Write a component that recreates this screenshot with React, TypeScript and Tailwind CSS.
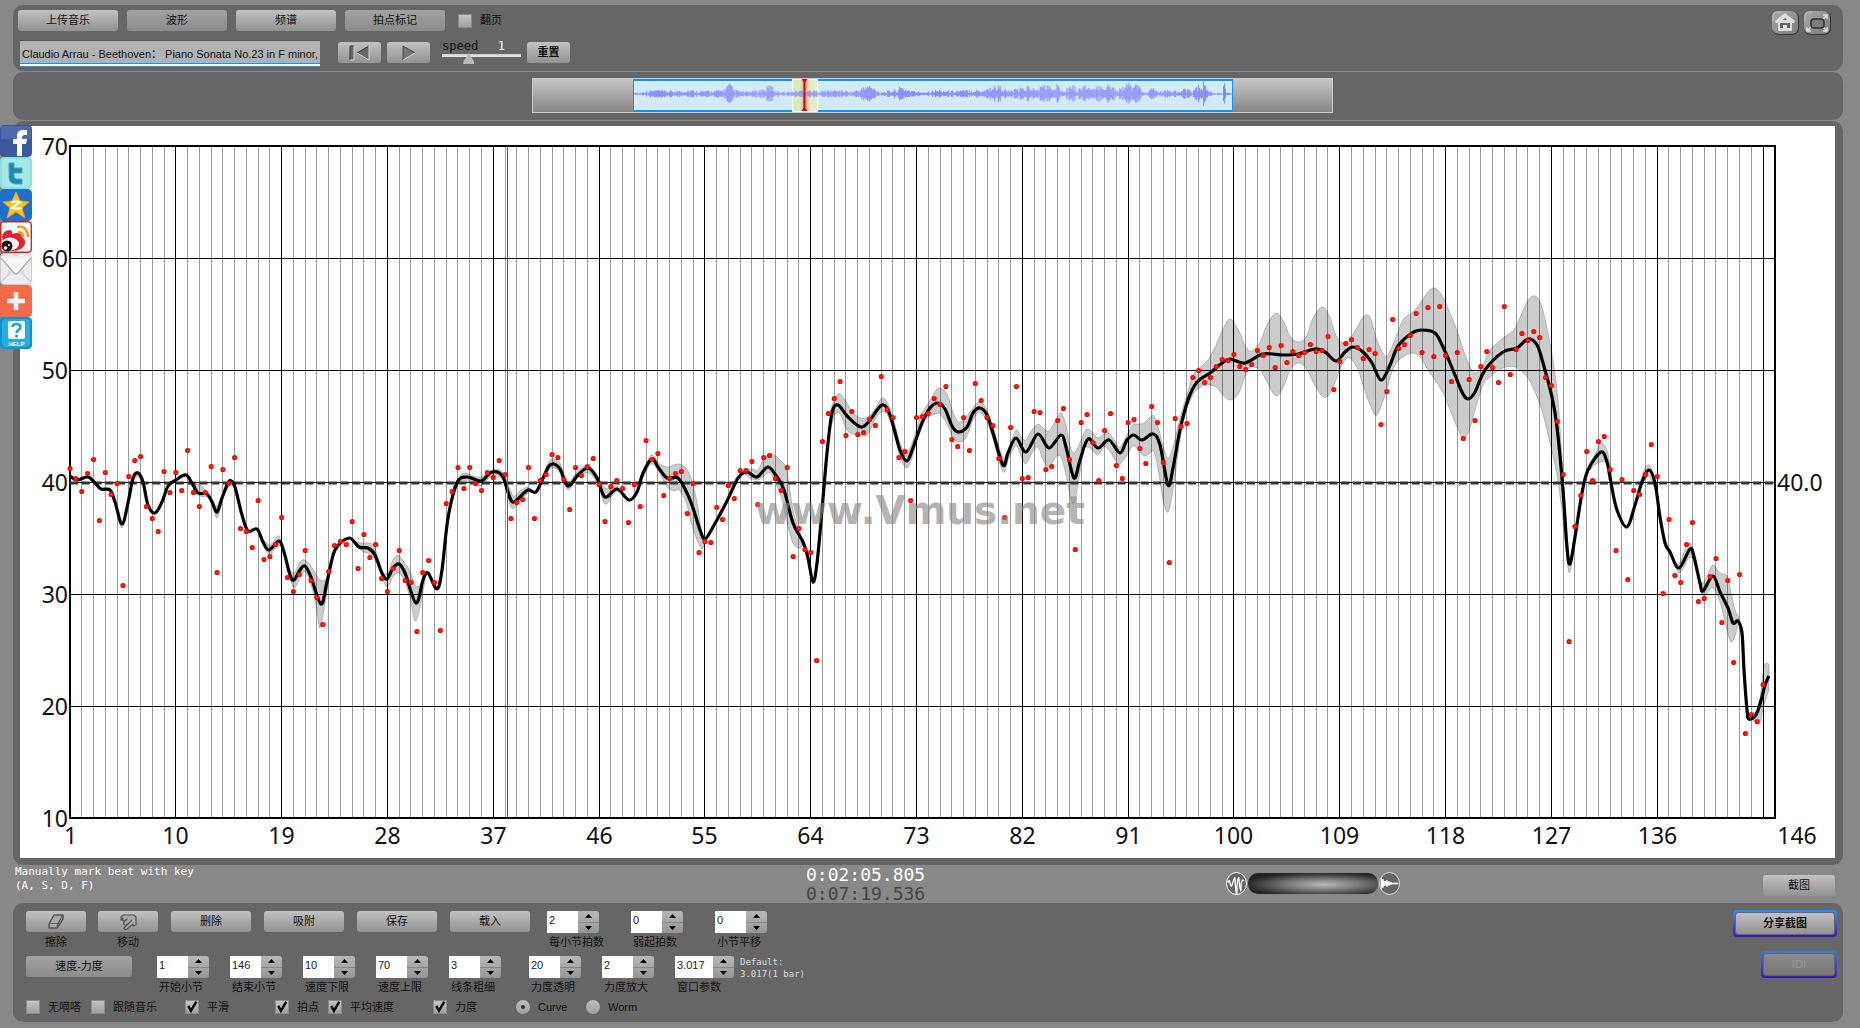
import type { ReactNode } from "react";

type Point = [number, number];
type BandPoint = [number, number, number];

const PLOT = { left: 70, right: 1776, top: 146, bottom: 818 };
const BAR_WIDTH = 11.757;
const BEAT_WIDTH = BAR_WIDTH / 2;
const LAST_BAR = 146;

const tempoTicks = [70, 60, 50, 40, 30, 20, 10];
const barTicks = [1, 10, 19, 28, 37, 46, 55, 64, 73, 82, 91, 100, 109, 118, 127, 136];

// one entry per beat, two beats in a bar
const beats = [
  468, 478, 491, 473, 459, 520, 472, 494, 483, 585, 476, 460, 456, 506, 518, 531, 471, 492, 472, 490,
  450, 492, 506, 492, 466, 572, 469, 483, 457, 528, 531, 547, 500, 559, 556, 544, 517, 577, 591, 574,
  550, 580, 597, 624, 571, 545, 541, 544, 521, 568, 534, 557, 544, 578, 591, 568, 550, 580, 582, 631,
  572, 560, 582, 630, 503, 491, 467, 488, 467, 483, 490, 472, 477, 460, 474, 518, 502, 499, 467, 518,
  480, 474, 454, 457, 479, 509, 467, 475, 466, 458, 484, 521, 486, 480, 488, 522, 484, 506, 440, 459,
  453, 495, 478, 473, 471, 513, 483, 552, 541, 542, 507, 519, 485, 498, 470, 470, 461, 504, 457, 455,
  478, 490, 467, 556, 528, 549, 552, 660, 441, 413, 398, 381, 435, 411, 434, 432, 419, 425, 376, 409,
  417, 457, 451, 500, 417, 416, 413, 398, 404, 386, 439, 446, 417, 450, 383, 400, 417, 425, 458, 517,
  427, 386, 478, 477, 411, 412, 469, 466, 420, 408, 459, 549, 422, 414, 442, 480, 430, 413, 465, 478,
  422, 419, 448, 463, 406, 422, 462, 562, 418, 426, 423, 377, 370, 382, 377, 366, 359, 360, 354, 366,
  369, 364, 350, 355, 347, 367, 345, 362, 351, 355, 352, 344, 351, 350, 336, 389, 361, 343, 339, 347,
  358, 349, 353, 424, 391, 319, 348, 344, 335, 313, 352, 307, 356, 306, 355, 381, 352, 438, 379, 420,
  366, 351, 367, 382, 306, 374, 349, 333, 340, 331, 337, 377, 385, 421, 474, 641, 526, 495, 451, 480,
  441, 436, 469, 550, 479, 579, 490, 494, 474, 444, 476, 593, 519, 575, 582, 544, 522, 601, 598, 576,
  558, 622, 580, 662, 574, 733, 714, 721, 684
];

const tempoCurve: Point[] = [
  [70, 476], [77, 480], [88, 477], [95, 483], [101, 489], [110, 490], [115, 502], [122, 524], [128, 503],
  [133, 478], [138, 473], [143, 482], [148, 505], [155, 513], [162, 502], [168, 486], [176, 480], [186, 475],
  [193, 485], [198, 493], [207, 494], [212, 502], [217, 512], [222, 498], [228, 483], [231, 481], [235, 487],
  [242, 515], [248, 531], [257, 529], [263, 542], [269, 550], [279, 541], [284, 552], [290, 575], [294, 580],
  [300, 570], [305, 566], [311, 577], [321, 604], [327, 582], [335, 550], [349, 538], [359, 547], [368, 548],
  [375, 555], [382, 573], [387, 579], [393, 568], [399, 564], [405, 573], [416, 603], [423, 580], [428, 573],
  [437, 589], [442, 570], [448, 518], [457, 483], [467, 477], [481, 481], [490, 473], [497, 472], [503, 477],
  [510, 498], [514, 502], [521, 496], [528, 490], [536, 492], [543, 478], [549, 466], [554, 464], [560, 469],
  [568, 486], [578, 475], [588, 468], [597, 478], [605, 497], [617, 489], [629, 500], [637, 492], [643, 473],
  [652, 459], [658, 467], [667, 478], [678, 478], [687, 493], [693, 508], [700, 530], [705, 539], [713, 527],
  [727, 501], [738, 478], [747, 472], [757, 477], [768, 467], [777, 477], [784, 490], [793, 523], [803, 542],
  [808, 558], [813, 582], [817, 563], [822, 510], [827, 453], [832, 413], [838, 405], [848, 417], [861, 427],
  [870, 420], [882, 405], [890, 415], [900, 450], [907, 461], [913, 448], [922, 423], [930, 408], [938, 403],
  [945, 409], [952, 426], [958, 432], [967, 427], [973, 413], [980, 408], [987, 415], [993, 433], [1003, 465],
  [1008, 453], [1016, 438], [1026, 452], [1038, 434], [1049, 448], [1061, 435], [1066, 447], [1074, 478],
  [1080, 460], [1088, 439], [1098, 448], [1109, 440], [1120, 453], [1127, 440], [1134, 435], [1142, 440],
  [1153, 434], [1160, 445], [1168, 485], [1173, 468], [1180, 430], [1188, 400], [1197, 382], [1210, 373],
  [1222, 363], [1230, 359], [1245, 363], [1263, 354], [1283, 355], [1298, 354], [1315, 349], [1325, 352],
  [1336, 361], [1345, 352], [1353, 347], [1363, 352], [1372, 363], [1381, 380], [1390, 365], [1398, 346],
  [1412, 333], [1422, 330], [1435, 333], [1443, 347], [1453, 370], [1462, 392], [1468, 399], [1475, 392],
  [1485, 370], [1503, 352], [1517, 348], [1528, 339], [1537, 345], [1543, 363], [1552, 397], [1557, 427],
  [1563, 490], [1567, 547], [1570, 564], [1575, 537], [1582, 493], [1588, 470], [1601, 452], [1607, 462],
  [1611, 483], [1617, 510], [1627, 527], [1635, 505], [1642, 482], [1649, 470], [1655, 483], [1660, 517],
  [1665, 543], [1670, 552], [1679, 568], [1690, 549], [1694, 557], [1700, 583], [1703, 591], [1713, 576],
  [1720, 592], [1728, 608], [1733, 623], [1738, 621], [1742, 633], [1744, 670], [1747, 710], [1749, 719],
  [1756, 715], [1762, 697], [1765, 685], [1769, 676]
];

// x, upper edge, lower edge
const dynamicsBands: BandPoint[][] = [
  [[116, 503, 506], [122, 521, 528], [128, 500, 506]],
  [[134, 474, 480], [138, 471, 476], [143, 478, 485]],
  [[193, 484, 487], [200, 485, 496], [207, 492, 497], [212, 499, 504], [217, 506, 518], [222, 495, 501]],
  [[226, 487, 491], [231, 479, 484], [236, 488, 492]],
  [[262, 538, 543], [269, 545, 555], [273, 542, 552], [279, 536, 545], [285, 552, 557]],
  [[288, 567, 571], [294, 573, 588], [300, 562, 577], [305, 560, 572], [311, 566, 585], [316, 574, 605], [320, 580, 628], [325, 580, 604], [329, 573, 580]],
  [[355, 542, 544], [362, 543, 551], [369, 543, 554], [375, 548, 560], [381, 570, 575], [387, 573, 587], [393, 560, 577], [398, 555, 573], [404, 562, 580], [410, 571, 598], [415, 585, 621], [420, 585, 608], [425, 575, 580]],
  [[453, 486, 492], [460, 476, 482], [466, 473, 481], [473, 476, 482], [481, 477, 486], [490, 471, 477], [497, 469, 476], [504, 474, 482], [510, 489, 505], [514, 496, 508], [521, 490, 500], [528, 487, 493]],
  [[543, 476, 482], [549, 461, 470], [554, 459, 468], [560, 463, 473], [568, 482, 490], [577, 472, 478], [588, 465, 473], [597, 475, 483], [605, 488, 504], [612, 487, 496], [618, 486, 490]],
  [[643, 472, 478], [651, 455, 464], [659, 463, 472], [667, 467, 487], [674, 465, 491], [679, 464, 490], [686, 468, 502], [691, 478, 522], [697, 502, 540], [702, 533, 549], [705, 536, 542]],
  [[745, 470, 474], [752, 469, 479], [758, 470, 480], [763, 460, 477], [770, 454, 473], [777, 457, 486], [783, 463, 503], [787, 471, 522], [793, 510, 543], [799, 529, 548], [803, 542, 545]],
  [
    [830, 412, 430], [835, 398, 415], [840, 394, 414], [847, 403, 430], [853, 413, 434], [861, 418, 436], [868, 417, 434],
    [875, 409, 420], [882, 398, 412], [888, 404, 416], [895, 425, 438], [900, 443, 457], [907, 453, 468], [913, 440, 455],
    [921, 415, 425], [929, 402, 417], [936, 390, 414], [940, 388, 414], [947, 394, 424], [953, 412, 438], [959, 422, 442],
    [966, 417, 438], [973, 408, 420], [979, 402, 412], [986, 408, 420], [994, 430, 442], [1003, 457, 472], [1009, 447, 458],
    [1016, 430, 446], [1021, 437, 456], [1026, 440, 464], [1032, 430, 453], [1038, 424, 447], [1043, 428, 460], [1049, 431, 467],
    [1056, 420, 457], [1061, 413, 457], [1066, 425, 475], [1070, 445, 495], [1074, 453, 504], [1079, 445, 478], [1084, 433, 450],
    [1088, 429, 447], [1093, 433, 451], [1098, 438, 455], [1104, 434, 447], [1109, 433, 450], [1115, 441, 460], [1120, 447, 464],
    [1127, 435, 455], [1133, 425, 446], [1138, 424, 450], [1144, 423, 456], [1149, 418, 454], [1154, 416, 452], [1159, 430, 475],
    [1163, 446, 500], [1168, 458, 512], [1173, 447, 490], [1180, 418, 440], [1186, 398, 412], [1193, 375, 395], [1199, 368, 388],
    [1208, 360, 385], [1216, 345, 387], [1222, 331, 394], [1230, 319, 400], [1239, 331, 393], [1246, 347, 373], [1252, 351, 367],
    [1260, 342, 370], [1267, 325, 382], [1276, 313, 396], [1284, 322, 386], [1290, 336, 370], [1298, 342, 363], [1306, 337, 368],
    [1313, 318, 382], [1322, 307, 396], [1329, 315, 395], [1336, 335, 380], [1343, 343, 363], [1350, 338, 358], [1358, 326, 370],
    [1363, 317, 385], [1370, 317, 405], [1377, 340, 415], [1386, 356, 392], [1394, 342, 367], [1403, 320, 357], [1413, 312, 353],
    [1420, 303, 357], [1428, 292, 370], [1435, 288, 380], [1443, 297, 393], [1450, 313, 410], [1457, 330, 427], [1463, 349, 438],
    [1469, 364, 431], [1475, 373, 410], [1483, 365, 385], [1490, 350, 377], [1503, 338, 368], [1515, 328, 367], [1527, 302, 377],
    [1535, 296, 392], [1542, 307, 411], [1550, 343, 443], [1557, 390, 475], [1562, 457, 512], [1567, 545, 560], [1570, 560, 572],
    [1575, 535, 542]
  ],
  [[1590, 463, 470], [1596, 452, 464], [1601, 443, 462], [1607, 450, 464], [1612, 475, 484]],
  [[1640, 483, 490], [1644, 470, 482], [1649, 465, 476], [1654, 475, 487]],
  [[1675, 562, 566], [1679, 564, 573], [1684, 552, 567], [1689, 543, 558], [1695, 555, 562], [1700, 580, 588], [1704, 582, 597], [1708, 574, 592], [1713, 565, 588], [1720, 573, 602], [1727, 576, 630], [1731, 592, 642], [1735, 610, 636], [1739, 617, 622]],
  [[1752, 714, 719], [1759, 705, 724], [1764, 667, 705], [1769, 664, 690]]
];

// x, half height of the recording's loudness
const envelope: Point[] = [
  [0, 1], [6, 1], [13, 3], [21, 4], [32, 3], [43, 3], [54, 4], [65, 3], [78, 3], [89, 4], [95, 10], [100, 4],
  [111, 2], [120, 3], [131, 5], [136, 9], [142, 3], [153, 2], [172, 4], [185, 3], [205, 4], [218, 2], [227, 5],
  [235, 9], [246, 2], [257, 3], [269, 7], [279, 3], [290, 2], [306, 4], [317, 3], [339, 4], [350, 4], [364, 9],
  [375, 3], [386, 5], [395, 8], [402, 4], [413, 10], [419, 5], [426, 10], [431, 4], [439, 10], [444, 4],
  [452, 9], [460, 4], [468, 9], [476, 9], [484, 5], [495, 9], [505, 10], [509, 2], [514, 1], [520, 6], [526, 2],
  [538, 4], [547, 2], [554, 6], [560, 3], [571, 12], [576, 3], [581, 1], [590, 1], [591, 11], [593, 11], [594, 1], [600, 1]
];

function curveTo(points: Point[]) {
  return points
    .slice(0, -1)
    .map((p1, i) => {
      const p0 = points[i - 1] ?? p1;
      const p2 = points[i + 1];
      const p3 = points[i + 2] ?? p2;
      const c1 = [p1[0] + (p2[0] - p0[0]) / 6, p1[1] + (p2[1] - p0[1]) / 6];
      const c2 = [p2[0] - (p3[0] - p1[0]) / 6, p2[1] - (p3[1] - p1[1]) / 6];
      return `C${c1.join(" ")} ${c2.join(" ")} ${p2.join(" ")}`;
    })
    .join("");
}

function linePath(points: Point[]) {
  return `M${points[0].join(" ")}${curveTo(points)}`;
}

function bandPath(band: BandPoint[]) {
  const upper = band.map(([x, top]): Point => [x, top]);
  const lower = band.map(([x, , bottom]): Point => [x, bottom]).reverse();
  return `${linePath(upper)}L${lower[0].join(" ")}${curveTo(lower)}Z`;
}

function wavePath() {
  let d = "";
  for (let x = 0; x < 600; x++) {
    const next = envelope.findIndex(([ex]) => ex > x);
    const [x0, h0] = envelope[next - 1];
    const [x1, h1] = envelope[next];
    const base = h0 + ((h1 - h0) * (x - x0)) / (x1 - x0);
    const noise = Math.abs(Math.sin(x * 12.9898) * 43758.5453) % 1;
    const h = Math.max(0.6, base * (0.25 + noise * 0.95));
    d += `M${x + 0.5} ${15 - h}V${15 + h * 0.9}`;
  }
  return d;
}

function tempoY(tempo: number) {
  return PLOT.top + ((70 - tempo) * (PLOT.bottom - PLOT.top)) / 60;
}

function barX(bar: number) {
  return Math.floor(PLOT.left + (bar - 1) * BAR_WIDTH) + 0.5;
}

const raised = "rounded-[3px] bg-linear-to-b from-[#c2c2c2] to-[#929292]";
const flat = "rounded-[3px] bg-linear-to-b from-[#a2a2a2] to-[#8b8b8b]";

function Button({ className = "", muted = false, children, ...rest }: { className?: string; muted?: boolean; children: ReactNode; "aria-label"?: string; disabled?: boolean }) {
  return (
    <button type="button" className={`flex h-[21px] shrink-0 items-center justify-center ${muted ? flat : raised} ${className}`} {...rest}>
      {children}
    </button>
  );
}

function Check({ label, checked = false, className = "" }: { label: string; checked?: boolean; className?: string }) {
  return (
    <label className={`flex h-4 shrink-0 items-center gap-2 whitespace-nowrap ${className}`}>
      <span className="relative size-[14px]">
        <input type="checkbox" defaultChecked={checked} className="peer block size-[14px] appearance-none border border-[#8a8a8a] bg-linear-to-b from-[#c4c4c4] to-[#a0a0a0]" />
        <svg viewBox="0 0 13 13" className="pointer-events-none absolute inset-0 hidden size-[14px] peer-checked:block" fill="none" stroke="#000" strokeWidth="2.2">
          <path d="M3 5.5 5.5 10 10.5 1.5" />
        </svg>
      </span>
      {label}
    </label>
  );
}

function Radio({ label, checked = false, className = "" }: { label: string; checked?: boolean; className?: string }) {
  return (
    <label className={`flex h-4 shrink-0 items-center gap-2 ${className}`}>
      <span className="relative size-[14px]">
        <input type="radio" name="shape" defaultChecked={checked} className="peer block size-[14px] appearance-none rounded-full bg-linear-to-b from-[#bdbdbd] to-[#a0a0a0]" />
        <span className="pointer-events-none absolute inset-[5px] hidden rounded-full bg-[#333] peer-checked:block" />
      </span>
      {label}
    </label>
  );
}

function Spinner({ id, label, value, className = "w-[73px]", field = "w-[31px]" }: { id: string; label: string; value: string; className?: string; field?: string }) {
  return (
    <div className={`shrink-0 ${className}`}>
      <div className="flex h-[22px]">
        <input id={id} defaultValue={value} className={`bg-white px-0.5 pb-1 text-[11px] text-[#222] outline-none ${field}`} />
        <div className="flex w-[21px] flex-col divide-y divide-[#858585] overflow-hidden rounded-r-[3px] bg-linear-to-b from-[#b8b8b8] to-[#959595]">
          <button type="button" aria-label={`${label} +`} className="flex flex-1 items-center justify-center">
            <svg viewBox="0 0 7 4" className="h-1 w-[7px]"><path d="M0 4 3.5 0 7 4Z" /></svg>
          </button>
          <button type="button" aria-label={`${label} -`} className="flex flex-1 items-center justify-center">
            <svg viewBox="0 0 7 4" className="h-1 w-[7px]"><path d="M0 0h7L3.5 4Z" /></svg>
          </button>
        </div>
      </div>
      <label htmlFor={id} className="mt-px block h-4 pl-0.5 leading-4 whitespace-nowrap">{label}</label>
    </div>
  );
}

function Toolbar() {
  return (
    <header className="flex h-[66px] items-start justify-between rounded-[10px] bg-[#666] pt-[5px] pr-3 pl-[5px]">
      <div>
        <div className="flex items-center gap-[9px]">
          <Button className="w-[100px]">上传音乐</Button>
          <Button muted className="w-[100px]">波形</Button>
          <Button className="w-[100px]">频谱</Button>
          <Button muted className="w-[100px]">拍点标记</Button>
          <Check label="翻页" className="ml-1" />
        </div>
        <div className="mt-[9px] flex items-start pl-0.5">
          <input
            aria-label="Track"
            readOnly
            value="Claudio Arrau - Beethoven： Piano Sonata No.23 in F minor,"
            className="h-[27px] w-[300px] border-t border-[#555] bg-[#b2b2b2] pb-[3px] pl-0.5 text-[11px] text-[#111] shadow-[inset_0_-1px_#1294f6,inset_0_-3px_#fff,inset_0_-4px_#1294f6] outline-none"
          />
          <div className="mt-0.5 ml-[18px] flex gap-1.5">
            <Button className="w-[43px]" aria-label="Back to start">
              <svg viewBox="0 0 22 16" className="h-4 w-[22px]">
                <path d="M1 15V1h4v14M20 15 8 8l12-7Z" fill="#666" />
                <path d="M1 15V1h4M20 1 8 8" fill="none" stroke="#333" />
                <path d="M5 1v14H1M8 8l12 7V1" fill="none" stroke="#d5d5d5" />
              </svg>
            </Button>
            <Button className="w-[43px]" aria-label="Play">
              <svg viewBox="0 0 14 16" className="h-4 w-[14px]">
                <path d="M1 1v14l12-7Z" fill="#777" />
                <path d="M1 15V1l12 7" fill="none" stroke="#444" />
                <path d="M1 15 13 8" fill="none" stroke="#d5d5d5" />
              </svg>
            </Button>
          </div>
          <div className="ml-3 w-[79px]">
            <label htmlFor="speed" className="flex h-3 items-center justify-between pr-4 font-['DejaVu_Sans_Mono',monospace] text-xs">
              speed <output className="text-white">1</output>
            </label>
            <input
              id="speed"
              type="range"
              min={0}
              max={3.2}
              step={0.1}
              defaultValue={1}
              className="mt-px block h-[11px] w-full appearance-none bg-[linear-gradient(#ccc,#eee)] bg-[length:100%_3px] bg-[position:0_1px] bg-no-repeat [&::-webkit-slider-thumb]:h-[11px] [&::-webkit-slider-thumb]:w-[11px] [&::-webkit-slider-thumb]:appearance-none [&::-webkit-slider-thumb]:bg-[#b9b9b9] [&::-webkit-slider-thumb]:[clip-path:polygon(50%_0,100%_80%,100%_100%,0_100%,0_80%)]"
            />
          </div>
          <Button className="mt-0.5 ml-1.5 w-[43px] font-bold">重置</Button>
        </div>
      </div>
      <div className="mt-px flex gap-[5px]">
        <button type="button" aria-label="Home" className="h-6 w-[27px] rounded-[7px] border-r border-b border-[#333] bg-linear-to-br from-[#aaa] to-[#7b7b7b]">
          <svg viewBox="0 0 26 23" className="size-full">
            <path d="M1 10V5q0-4 5-4h4" fill="none" stroke="#b5b5b5" strokeWidth="1.5" />
            <path d="m13 2 10 8-1 2h-2v8H6v-8H4l-1-2Z" fill="#ddd" />
            <path d="M8 17v-5h10v5h-3v-3h-4v3ZM11 9l2-2 2 2Z" fill="#666" />
          </svg>
        </button>
        <button type="button" aria-label="Full screen" className="h-6 w-[27px] rounded-[7px] border-r border-b border-[#333] bg-linear-to-br from-[#aaa] to-[#7b7b7b]">
          <svg viewBox="0 0 26 23" className="size-full" fill="none" stroke="#ddd" strokeWidth="1.5">
            <path d="M1 10V5q0-4 5-4h2" stroke="#b5b5b5" />
            <path d="M19 4h4v4M23 4l-4 4M7 20H3v-4M3 20l4-4M19 20h4v-4M23 20l-4-4" />
            <rect x="7" y="8" width="13" height="9" rx="3" fill="#7d7d7d" stroke="#333" />
          </svg>
        </button>
      </div>
    </header>
  );
}

function Overview() {
  return (
    <section className="mt-px flex h-12 justify-center rounded-[10px] bg-[#666] pt-[6px] pl-[9px]">
      <div className="h-[35px] w-[801px] border border-[#ccc] bg-linear-to-b from-[#c6c6c6] to-[#868686] pl-[100px]">
        <div className="relative h-[33px] w-[600px] border-x border-y-2 border-x-[#1393ee] border-y-[#1393ee] bg-[#d0ebff]">
          <div className="absolute -top-0.5 left-[158px] h-[33px] w-[26px] border border-white bg-linear-to-r from-[#d9ecbb] from-30% via-[#d99f90] to-[#e6ecc4] to-70%" />
          <svg viewBox="0 0 600 32" className="absolute -top-0.5 left-0 h-8 w-full">
            <path d={wavePath()} stroke="#8489fb" strokeWidth="1" />
            <path d="M171 0V32" stroke="#e00000" strokeWidth="2" />
            <path d="M168 0h6l-3 4ZM168 32h6l-3-4Z" fill="#e00000" />
          </svg>
        </div>
      </div>
    </section>
  );
}

function TempoChart() {
  const bars = Array.from({ length: LAST_BAR }, (_, i) => i + 1);
  const baseline = tempoY(40);

  return (
    <section className="mt-px rounded-[10px] bg-[#666] pt-[5px] pr-2 pb-[7px] pl-[7px]">
      <svg viewBox="20 126 1815 732" className="block h-auto w-full bg-white" role="img" aria-label="Tempo by bar">
        <g shapeRendering="crispEdges">
          {bars.map((bar) => (
            <path key={bar} d={`M${barX(bar)} ${PLOT.top}V${PLOT.bottom}`} stroke={barTicks.includes(bar) || bar === 145 ? "#000" : "#9c9c9c"} />
          ))}
          {tempoTicks.map((tempo) => (
            <path key={tempo} d={`M${PLOT.left} ${Math.floor(tempoY(tempo)) + 0.5}H${PLOT.right}`} stroke="#000" />
          ))}
          <rect x={PLOT.left} y={PLOT.top} width={PLOT.right - PLOT.left - 1} height={PLOT.bottom - PLOT.top} fill="none" stroke="#000" strokeWidth="2" />
        </g>

        {dynamicsBands.map((band) => (
          <path key={band[0][0]} d={bandPath(band)} fill="#000" fillOpacity="0.2" stroke="#000" strokeOpacity="0.2" strokeWidth="1" />
        ))}

        <path d={`M${PLOT.left} ${baseline + 1}H${PLOT.right}`} stroke="#333" strokeWidth="3" strokeDasharray="8 3.77" />
        <path d={linePath(tempoCurve)} fill="none" stroke="#000" strokeWidth="3.2" strokeLinejoin="round" />
        <path d="M507.5 146V818" stroke="#e8281c" shapeRendering="crispEdges" />

        {beats.map((y, i) => (
          <circle key={i} cx={PLOT.left + i * BEAT_WIDTH} cy={y + 0.5} r="1.6" fill="#f66" stroke="#f00" strokeWidth="1.9" />
        ))}

        <g fontFamily="'Noto Sans', sans-serif" fontSize="23" fill="#111">
          {tempoTicks.map((tempo) => (
            <text key={tempo} x="68" y={tempoY(tempo) + 9} textAnchor="end">{tempo}</text>
          ))}
          {barTicks.map((bar) => (
            <text key={bar} x={barX(bar)} y="844" textAnchor="middle">{bar}</text>
          ))}
          <text x="1797" y="844" textAnchor="middle">{LAST_BAR}</text>
          <text x="1777" y={baseline + 9}>40.0</text>
        </g>
        <text x="920" y="524" textAnchor="middle" fontFamily="'DejaVu Sans', sans-serif" fontWeight="bold" fontSize="39" fill="#888" fillOpacity="0.65">www.Vmus.net</text>
      </svg>
    </section>
  );
}

function ShareBar() {
  const item = "block size-8 overflow-hidden rounded-[4px]";
  return (
    <nav aria-label="Share" className="absolute top-[125px] left-0">
      <a href="#facebook" aria-label="Facebook" className={item}>
        <svg viewBox="0 0 32 32">
          <rect width="32" height="32" rx="4" fill="#3b579d" />
          <path d="M1 1h30v13H1Z" fill="#5b78b8" opacity=".6" />
          <path d="M17 31V19h-4v-5h4v-3q0-6 6-6h4v5h-2.500q-2.500 0-2.500 2v2h5l-1 5h-4v12Z" fill="#fff" />
        </svg>
      </a>
      <a href="#twitter" aria-label="Twitter" className={item}>
        <svg viewBox="0 0 32 32">
          <rect width="32" height="32" rx="4" fill="#8fdedf" />
          <rect x="2" y="2" width="28" height="28" rx="4" fill="#a6e8e6" />
          <path d="M9 6h5v5h8v5h-8v3q0 3 3 3h5v5h-6q-7 0-7-7Z" fill="#2586b4" stroke="#4ea5c8" />
        </svg>
      </a>
      <a href="#qzone" aria-label="Qzone" className={item}>
        <svg viewBox="0 0 32 32">
          <rect width="32" height="32" rx="4" fill="#1e70cd" />
          <path d="m16 3 4 9 9 1-7 6 3 10-9-6-9 6 3-10-7-6 9-1Z" fill="#fdc421" stroke="#ef9d10" />
          <path d="M11 13q6-1 9 0l-8 6q6 1 10 0" fill="none" stroke="#fff" strokeWidth="2" />
        </svg>
      </a>
      <a href="#weibo" aria-label="Weibo" className={item}>
        <svg viewBox="0 0 32 32">
          <rect x=".7" y=".7" width="30.600" height="30.600" rx="3" fill="#fff" stroke="#d61f1f" strokeWidth="1.400" />
          <path d="M2 16q1-7 8-7 3 1 2 4 9-3 10 3 4 3 3 7-3 7-12 7H5Z" fill="#e0252c" />
          <ellipse cx="10" cy="23" rx="9" ry="6.500" fill="#fff" />
          <circle cx="7" cy="25" r="5.500" fill="#111" />
          <circle cx="5.500" cy="27" r="1.800" fill="#fff" />
          <circle cx="9" cy="24" r="1" fill="#fff" />
          <path d="M17 6q10-2 11 10M18 11q5 0 5 5" fill="none" stroke="#f39b1c" strokeWidth="2.600" />
        </svg>
      </a>
      <a href="#mail" aria-label="Mail" className={item}>
        <svg viewBox="0 0 32 32">
          <rect x=".5" y=".5" width="31" height="31" rx="4" fill="#ececec" stroke="#ccc" />
          <path d="m1 29 11-11M31 29 20 18" stroke="#d0d0d0" strokeWidth="1.500" />
          <path d="m1 5 13 15q2 2 4 0L31 5" fill="#f8f8f8" stroke="#b5b5b5" strokeWidth="1.500" />
        </svg>
      </a>
      <a href="#more" aria-label="More" className={item}>
        <svg viewBox="0 0 32 32">
          <rect width="32" height="32" rx="4" fill="#f8694a" />
          <path d="M16 7v18M7 16h18" stroke="#fff" strokeWidth="4.500" />
        </svg>
      </a>
      <a href="#help" aria-label="Help" className={item}>
        <svg viewBox="0 0 32 32">
          <rect width="32" height="32" rx="4" fill="#0d8fd0" />
          <rect x="2" y="2" width="28" height="28" rx="4" fill="#23aee4" />
          <rect x="8" y="4" width="17" height="18" rx="2" fill="#fff" />
          <path d="M12.500 10q0-3 4-3t4 3q0 2-2 3t-2 3" fill="none" stroke="#1ca3dc" strokeWidth="2.600" />
          <circle cx="16.500" cy="19" r="1.600" fill="#1ca3dc" />
          <text x="16.500" y="29" textAnchor="middle" fontFamily="'Liberation Sans', sans-serif" fontWeight="bold" fontSize="6" fill="#fff">HELP</text>
        </svg>
      </a>
    </nav>
  );
}

function StatusRow() {
  return (
    <section className="flex h-[38px] items-start font-['DejaVu_Sans_Mono',monospace]">
      <p className="w-[790px] shrink-0 pl-0.5 text-[11px] leading-[14px] text-white">
        Manually mark beat with key
        <br />
        (A, S, D, F)
      </p>
      <div className="w-[423px] shrink-0 pl-[3px] text-lg leading-[19px]">
        <div className="text-white">0:02:05.805</div>
        <div className="text-[#444]">0:07:19.536</div>
      </div>
      <div className="mt-[7px] flex items-center gap-px">
        <svg viewBox="0 0 21 23" className="h-[23px] w-[21px]" fill="none" stroke="#fff">
          <ellipse cx="10.500" cy="11.500" rx="10" ry="11" fill="#666" />
          <path d="M2 11q1-5 2 0t2 2 2-6 1 0 1 12 1 0 1-12 1 0 1 9 1 0 1-7 1-1 1 1" strokeWidth="1.300" />
        </svg>
        <input
          type="range"
          aria-label="Mix"
          className="h-[21px] w-[130px] appearance-none rounded-[10px] bg-[radial-gradient(ellipse_at_58%_55%,#bbb,#777_35%,#222_75%)] [&::-webkit-slider-thumb]:appearance-none [&::-webkit-slider-thumb]:opacity-0"
        />
        <svg viewBox="0 0 21 23" className="h-[23px] w-[21px]">
          <ellipse cx="10.500" cy="11.500" rx="10" ry="11" fill="#666" stroke="#ddd" />
          <path d="M2 6v11l1-3 1 2 1-3 1 1 1-2 1 3 1-3 1 2 1-2 1 1 1-1h6v-1h-6l-1-1-1 1-1-2-1 2-1-3-1 2-1-1-1 1-1-3-1 2Z" fill="#fff" stroke="#fff" strokeWidth=".6" />
        </svg>
      </div>
      <Button className="mt-2.5 mr-2 ml-auto w-[72px] font-['Liberation_Sans','Noto_Sans_CJK_SC',sans-serif]">截图</Button>
    </section>
  );
}

function Controls() {
  return (
    <section className="flex items-start justify-between rounded-[10px] bg-[#666] pt-2 pr-1.5 pb-[7px] pl-[13px]">
      <div>
        <div className="flex">
          <div className="flex gap-3 text-center leading-4">
            <div>
              <Button className="mb-0.5 w-[60px]" aria-label="擦除">
                <svg viewBox="0 0 18 16" className="h-4 w-[18px]" fill="#aaa" stroke="#555" strokeWidth="1.500" strokeLinejoin="round">
                  <path d="M7 1h9l-5 9H2Z" />
                  <path d="M2 10v4h8l1-4M10 14l6-9V1" />
                </svg>
              </Button>
              擦除
            </div>
            <div>
              <Button className="mb-0.5 w-[60px]" aria-label="移动">
                <svg viewBox="0 0 18 16" className="h-4 w-[18px]" fill="#aaa" stroke="#555" strokeWidth="1.200" strokeLinejoin="round">
                  <path d="M2 6V3l2-2h11l2 2v8l-3 1v-2l-6 5q-3 1-3-1l4-4-3 1q-2-1-1-3l3-3-3 2q-2 0-1-3Z" />
                  <path d="m9 10 4-4" />
                </svg>
              </Button>
              移动
            </div>
          </div>
          <div className="ml-[13px] flex gap-[13px]">
            <Button className="w-20">删除</Button>
            <Button className="w-20">吸附</Button>
            <Button className="w-20">保存</Button>
            <Button className="w-20">载入</Button>
          </div>
          <div className="ml-[17px] flex">
            <Spinner id="beats-per-bar" label="每小节拍数" value="2" className="w-[84px]" />
            <Spinner id="pickup" label="弱起拍数" value="0" className="w-[84px]" />
            <Spinner id="bar-shift" label="小节平移" value="0" className="w-[84px]" />
          </div>
        </div>

        <div className="mt-1.5 flex">
          <Button muted className="w-[106px]">速度-力度</Button>
          <div className="ml-[25px] flex">
            <Spinner id="first-bar" label="开始小节" value="1" />
            <Spinner id="last-bar" label="结束小节" value="146" />
            <Spinner id="tempo-min" label="速度下限" value="10" />
            <Spinner id="tempo-max" label="速度上限" value="70" />
            <Spinner id="line-width" label="线条粗细" value="3" />
          </div>
          <div className="ml-[7px] flex">
            <Spinner id="opacity" label="力度透明" value="20" />
            <Spinner id="gain" label="力度放大" value="2" />
            <Spinner id="window" label="窗口参数" value="3.017" className="w-[65px]" field="w-[38px]" />
          </div>
          <p className="font-['DejaVu_Sans_Mono',monospace] text-[9px] leading-3 text-[#ddd]">
            Default:
            <br />
            3.017(1 bar)
          </p>
        </div>

        <div className="mt-1 flex">
          <Check label="无嘀嗒" className="w-[65px]" />
          <Check label="跟随音乐" className="w-[94px]" />
          <Check label="平滑" checked className="w-[90px]" />
          <Check label="拍点" checked className="w-[53px]" />
          <Check label="平均速度" checked className="w-[105px]" />
          <Check label="力度" checked className="w-[83px]" />
          <Radio label="Curve" checked className="w-[70px]" />
          <Radio label="Worm" />
        </div>
      </div>

      <div className="flex flex-col items-end gap-3.5">
        <div className="-mt-px rounded-[4px] bg-linear-to-b from-[#2f8cff] to-[#3a10b8] p-0.5">
          <div className="rounded-[3px] bg-[#666] p-px">
            <Button className="w-[98px] font-bold">分享截图</Button>
          </div>
        </div>
        <div className="rounded-[4px] bg-linear-to-b from-[#2f7ce0] to-[#3a10b8] p-0.5">
          <div className="rounded-[3px] bg-[#666] p-px">
            <button type="button" disabled className="block h-[21px] w-[70px] rounded-[3px] bg-linear-to-b from-[#8c8c8c] to-[#777] text-[#999]">IDI</button>
          </div>
        </div>
      </div>
    </section>
  );
}

export default function App() {
  return (
    <main className="relative min-h-screen bg-[#888] pt-[5px] pr-[17px] pb-[7px] pl-[13px] font-['Liberation_Sans','Noto_Sans_CJK_SC',sans-serif] text-[11px] text-[#111]">
      <Toolbar />
      <Overview />
      <TempoChart />
      <StatusRow />
      <Controls />
      <ShareBar />
    </main>
  );
}
